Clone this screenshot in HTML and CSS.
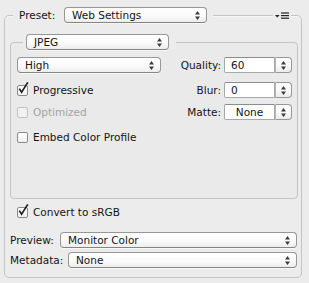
FILE: index.html
```html
<!DOCTYPE html>
<html>
<head>
<meta charset="utf-8">
<link rel="stylesheet" href="styles.css">
</head>
<body>
<div class="panel">
  <div class="head">
    <span class="lbl">Preset:</span>
    <div class="select preset"><span class="val">Web Settings</span><svg class="ud" width="5" height="9" viewBox="0 0 5 9"><path d="M0 3.5L2.5 0L5 3.5ZM0 5.5L2.5 9L5 5.5Z"/></svg></div>
    <span class="mask m6"></span>
    <span class="spacer"></span>
    <span class="menu"><svg width="18" height="16" viewBox="0 0 18 16"><path d="M2 8L6.6 8L4.3 10.6Z" fill="#222"/><rect x="8" y="5.4" width="8" height="1.2" fill="#222"/><rect x="8" y="8" width="8" height="1.2" fill="#222"/><rect x="8" y="10.6" width="8" height="1.2" fill="#222"/></svg></span>
  </div>
  <div class="box">
    <div class="ihead">
      <span class="imask"><div class="select fmt"><span class="val">JPEG</span><svg class="ud" width="5" height="9" viewBox="0 0 5 9"><path d="M0 3.5L2.5 0L5 3.5ZM0 5.5L2.5 9L5 5.5Z"/></svg></div></span>
    </div>
    <div class="group">
      <div class="row r1">
        <div class="select qual"><span class="val">High</span><svg class="ud" width="5" height="9" viewBox="0 0 5 9"><path d="M0 3.5L2.5 0L5 3.5ZM0 5.5L2.5 9L5 5.5Z"/></svg></div>
        <div class="pair"><span class="plbl">Quality:</span><span class="field">60</span><span class="step"><svg width="5" height="9" viewBox="0 0 5 9"><path d="M0 3.5L2.5 0L5 3.5ZM0 5.5L2.5 9L5 5.5Z"/></svg></span></div>
      </div>
      <div class="row r2">
        <label class="check"><span class="cb on"><svg width="13" height="13" viewBox="0 0 13 13"><path d="M2.3 5.6L4.6 9.2L10.8 -0.6" fill="none" stroke="#1f1f1f" stroke-width="1.7"/></svg></span>Progressive</label>
        <div class="pair"><span class="plbl">Blur:</span><span class="field">0</span><span class="step"><svg width="5" height="9" viewBox="0 0 5 9"><path d="M0 3.5L2.5 0L5 3.5ZM0 5.5L2.5 9L5 5.5Z"/></svg></span></div>
      </div>
      <div class="row r3">
        <label class="check dis"><span class="cb"></span>Optimized</label>
        <div class="pair"><span class="plbl">Matte:</span><span class="field ctr">None</span><span class="step"><svg width="5" height="9" viewBox="0 0 5 9"><path d="M0 3.5L2.5 0L5 3.5ZM0 5.5L2.5 9L5 5.5Z"/></svg></span></div>
      </div>
      <div class="row r4">
        <label class="check"><span class="cb"></span>Embed Color Profile</label>
      </div>
    </div>
    <div class="row conv">
      <label class="check"><span class="cb on"><svg width="13" height="13" viewBox="0 0 13 13"><path d="M2.3 5.6L4.6 9.2L10.8 -0.6" fill="none" stroke="#1f1f1f" stroke-width="1.7"/></svg></span>Convert to sRGB</label>
    </div>
    <div class="row line prev">
      <span class="llbl w50">Preview:</span>
      <div class="select grow"><span class="val">Monitor Color</span><svg class="ud" width="5" height="9" viewBox="0 0 5 9"><path d="M0 3.5L2.5 0L5 3.5ZM0 5.5L2.5 9L5 5.5Z"/></svg></div>
    </div>
    <div class="row line meta">
      <span class="llbl w58">Metadata:</span>
      <div class="select grow"><span class="val">None</span><svg class="ud" width="5" height="9" viewBox="0 0 5 9"><path d="M0 3.5L2.5 0L5 3.5ZM0 5.5L2.5 9L5 5.5Z"/></svg></div>
    </div>
  </div>
</div>
</body>
</html>
```
FILE: styles.css
```css
html, body {
  margin: 0;
  padding: 0;
  background: #ececec;
}
body {
  width: 309px;
  height: 283px;
  overflow: hidden;
  font-family: "DejaVu Sans", sans-serif;
  font-size: 10.5px;
  color: #141414;
}
.panel {
  margin: 7px 0 0 4px;
  width: 298px;
}
.head {
  display: flex;
  align-items: center;
  height: 16px;
  position: relative;
  z-index: 1;
}
.lbl {
  margin-left: 9px;
  width: 51px;
  padding-left: 6px;
  box-sizing: border-box;
  background: #ececec;
  line-height: 16px;
}
.mask {
  background: #ececec;
  height: 16px;
}
.m6 { width: 6px; }
.spacer { flex: 1; }
.menu {
  width: 18px;
  height: 16px;
  margin-right: 11px;
  background: #ececec;
  display: flex;
}
.select {
  box-sizing: border-box;
  height: 16px;
  border: 1px solid #979797;
  border-bottom-color: #858585;
  border-radius: 4px;
  background: linear-gradient(#ffffff, #fbfbfb 55%, #ededed);
  display: flex;
  align-items: center;
  padding: 0 6px 0 7px;
  box-shadow: 0 1px 0 rgba(255,255,255,0.6);
}
.select .val {
  flex: 1;
  white-space: nowrap;
  line-height: 14px;
}
.select .ud path, .step path { fill: #3c3c3c; }
.preset { width: 143px; }
.box {
  margin-top: -8px;
  box-sizing: border-box;
  height: 263px;
  border: 1px solid #c4c4c4;
  border-radius: 5px;
  box-shadow: inset 0 1px 0 #f6f6f6;
}
.ihead {
  margin-top: 18px;
  height: 16px;
  display: flex;
  position: relative;
  z-index: 1;
  padding-left: 18px;
}
.imask {
  background: #ececec;
  padding: 0 7px 0 3px;
  display: flex;
}
.fmt { width: 143px; }
.group {
  margin: -8px 3px 0 5px;
  box-sizing: border-box;
  height: 157px;
  border: 1px solid #c4c4c4;
  border-radius: 4px;
  background: #eaeaea;
  padding: 0 5px 0 6px;
}
.row {
  display: flex;
  align-items: center;
  justify-content: space-between;
  height: 16px;
}
.r1 { margin-top: 14px; }
.r2 { margin-top: 9px; }
.r3 { margin-top: 6px; }
.r4 { margin-top: 9px; }
.qual { width: 144px; }
.pair {
  display: flex;
  align-items: center;
  height: 16px;
}
.plbl {
  margin-right: 3px;
}
.field {
  box-sizing: border-box;
  width: 51px;
  height: 16px;
  background: #fff;
  border: 1px solid #a8a8a8;
  border-top-color: #8c8c8c;
  border-radius: 2px 0 0 2px;
  padding-left: 6px;
  line-height: 14px;
}
.field.ctr {
  text-align: center;
  padding-left: 0;
}
.step {
  box-sizing: border-box;
  width: 17px;
  height: 16px;
  border: 1px solid #979797;
  border-left-color: #b5b5b5;
  border-radius: 0 4px 4px 0;
  background: linear-gradient(#ffffff, #f8f8f8 55%, #ebebeb);
  display: flex;
  align-items: center;
  justify-content: center;
}
.check {
  display: flex;
  align-items: center;
  white-space: nowrap;
}
.cb {
  position: relative;
  box-sizing: border-box;
  width: 11px;
  height: 11px;
  border: 1px solid #8a8a8a;
  border-radius: 2px;
  background: linear-gradient(#ffffff, #f0f0f0);
  margin-right: 5px;
}
.cb svg {
  position: absolute;
  left: -1px;
  top: -3px;
  overflow: visible;
}
.check.dis { color: #a3a3a3; }
.check.dis .cb { border-color: #c2c2c2; background: #f2f2f2; }
.conv {
  margin: 5px 0 0 12px;
}
.line {
  justify-content: flex-start;
  margin-right: 4px;
  padding-left: 5px;
}
.prev { margin-top: 12px; }
.meta { margin-top: 4px; }
.llbl { flex: none; }
.w50 { width: 50px; }
.w58 { width: 58px; }
.grow { flex: 1; }
```
